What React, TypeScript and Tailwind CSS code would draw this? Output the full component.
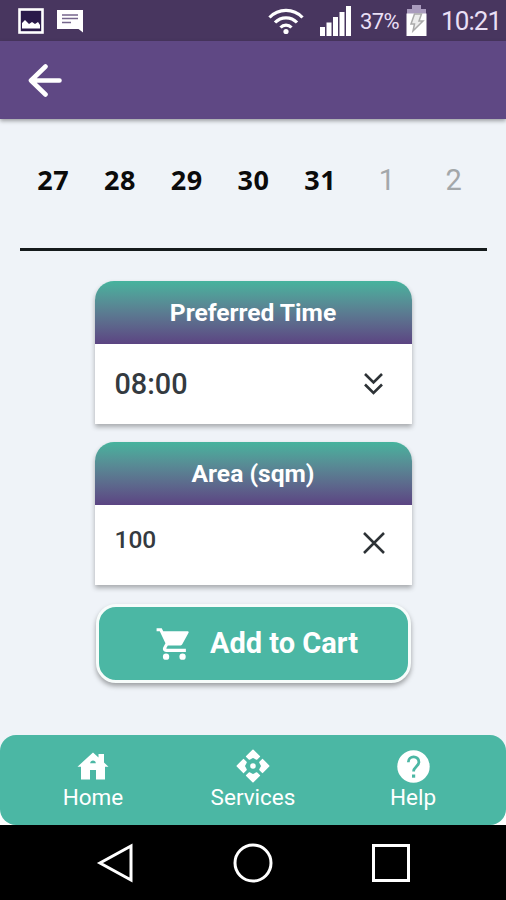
import type { ReactNode } from "react";

type Day = { label: string; muted?: boolean };

const days: Day[] = [
  { label: "27" },
  { label: "28" },
  { label: "29" },
  { label: "30" },
  { label: "31" },
  { label: "1", muted: true },
  { label: "2", muted: true },
];

function StatusBar() {
  return (
    <div className="flex h-[41px] shrink-0 items-center bg-[#48365f] text-[#e9dff5]">
      <svg className="ml-[18px] size-[26px]" viewBox="0 0 26 26">
        <rect x="1.5" y="1.5" width="23" height="23" fill="#2a1a4a" stroke="#fff" strokeWidth="2.6" />
        <path d="M4 20.500v-5.500l3-3 4 4 3-2 3 2 3-2 2 3v3.500z" fill="#fff" />
      </svg>
      <svg className="ml-3 h-[26px] w-7" viewBox="0 0 28 26">
        <path d="M1 2h26v22.500L22.500 21H1z" fill="#fff" />
        <path d="M6 7h16M6 10.500h16M6 14.500h9" stroke="#75668c" strokeWidth="1.500" />
      </svg>
      <svg className="ml-[184px] h-7 w-9" viewBox="0 0 36 28" fill="none" stroke="#fff" strokeWidth="3.200">
        <path d="M1.500 10.500C10.500 1 25.500 1 34.500 10.500" />
        <path d="M7 15.500c6-6.300 16-6.300 22 0" />
        <path d="M12.500 20.500c3-3.200 8-3.200 11 0" />
        <circle cx="18" cy="24.500" r="2.600" fill="#fff" stroke="none" />
      </svg>
      <svg className="ml-4 h-[30px] w-8" viewBox="0 0 32 30" fill="#fff">
        <path d="M0 21h5v9H0zM6.500 16.500h5V30h-5zM13 11h5v19h-5zM19.500 6h5v24h-5zM26 0h5v30h-5z" />
      </svg>
      <span className="mt-[2px] ml-2 w-10 text-[22px] tracking-[-0.6px] whitespace-nowrap">37%</span>
      <svg className="ml-[6px] h-8 w-[21px]" viewBox="0 0 21 32">
        <path d="M6 0h9v4h5v5H1V4h5z" fill="#a99bbd" />
        <path d="M.5 8.500h20V31H.5z" fill="#fff" />
        <path d="M8.500 9h7l-2.500 7h4L7 26l1.500-7H5z" fill="#ececec" stroke="#aaa" strokeWidth="1.500" />
      </svg>
      <span className="mt-[2px] ml-[14px] text-[26px] tracking-[-0.9px]">10:21</span>
    </div>
  );
}

function FieldCard({ title, children }: { title: string; children: ReactNode }) {
  return (
    <section className="w-[317px] rounded-t-[19px] bg-white shadow-[0_3px_5px_rgba(0,0,0,0.3)]">
      <h2 className="flex h-[63px] items-center justify-center rounded-t-[19px] bg-linear-to-b from-[#45b39d] to-[#5b4482] pt-[2px] text-[24.600px] font-bold text-white">
        {title}
      </h2>
      <div className="flex h-20 justify-between pr-[27px] pl-5 text-[#343a40]">{children}</div>
    </section>
  );
}

function CartIcon() {
  return (
    <svg className="size-[38px]" viewBox="0 0 24 24" fill="#fff">
      <path d="M1 2v2h2l3.600 7.600-1.350 2.450C4.500 15.400 5.500 17 7 17h12.500v-2H7.400c-.2 0-.3-.2-.2-.4L8.100 13h7.450c.75 0 1.400-.4 1.750-1L21.200 4.900c.3-.5-.1-.9-.8-.9H5.200L4.250 2z" />
      <circle cx="7" cy="20" r="2" />
      <circle cx="17.400" cy="20" r="2" />
    </svg>
  );
}

function HouseIcon() {
  return (
    <svg className="h-[28px] w-[32px]" viewBox="0 0 32 28">
      <path d="M16 .5 21.500 5.500V2h5.500v8.500l4.500 4.200H28v12.800h-9V18h-6v9.500H4V14.700H.5z" fill="#fff" />
      <path d="M13.200 11.200c0-3.600 5.600-3.600 5.600 0z" fill="#4bb7a4" />
    </svg>
  );
}

function ServicesIcon() {
  const arm = "M0-15.700 6.300-9.500 3.700-7 0-9 -3.700-7-6.300-9.500z";
  return (
    <svg className="size-[36px]" viewBox="-18 -18 36 36" fill="#fff" stroke="#fff" strokeWidth="1.600" strokeLinejoin="round">
      <path d={arm} />
      <path d={arm} transform="rotate(90)" />
      <path d={arm} transform="rotate(180)" />
      <path d={arm} transform="rotate(270)" />
      <circle r="2" />
    </svg>
  );
}

function HelpIcon() {
  return (
    <svg className="size-[33px]" viewBox="0 0 33 33" fill="none">
      <circle cx="16.500" cy="16.500" r="16.200" fill="#fff" />
      <path d="M11.300 12.200c0-7 10.600-7 10.600-.2 0 4.300-5.300 4.700-5.300 9.500" stroke="#4bb7a4" strokeWidth="2.800" />
      <path d="M15 24.500h3.200v3.200H15z" fill="#4bb7a4" />
    </svg>
  );
}

function NavItem({ icon, label }: { icon: ReactNode; label: string }) {
  return (
    <button className="flex w-40 flex-col items-center text-[22.500px] leading-[25px] text-white">
      <span className="flex h-[38px] items-center">{icon}</span>
      {label}
    </button>
  );
}

export default function App() {
  return (
    <div className="flex h-[900px] w-[506px] flex-col overflow-hidden bg-[#eff3f8] font-['Roboto',sans-serif]">
      <StatusBar />
      <header className="flex h-[78px] shrink-0 items-center bg-[#5f4884] pl-7 shadow-[0_2px_4px_rgba(0,0,0,0.35)]">
        <svg className="h-9 w-[35px]" viewBox="0 0 35 36" fill="none" stroke="#fff" strokeWidth="4.600" strokeLinecap="round" strokeLinejoin="round">
          <path d="M31.500 18.500H3M17.500 4.500 3 18.500 17.500 32.500" />
        </svg>
      </header>

      <main className="flex flex-1 flex-col items-center">
        <div className="mt-[37px] ml-px grid h-[95px] w-[467px] grid-cols-7 border-b-[3px] border-[#151a1c] text-center">
          {days.map((day) => (
            <span
              key={day.label}
              className={
                day.muted
                  ? "text-[29px] leading-[48px] text-[#a3a7aa]"
                  : "font-['Open_Sans',sans-serif] text-[27px] leading-[48px] font-bold tracking-[0.6px] text-[#0b0b0b]"
              }
            >
              {day.label}
            </span>
          ))}
        </div>

        <div className="mt-[30px] flex flex-col items-center gap-[18px]">
          <FieldCard title="Preferred Time">
            <span className="text-[28.800px] leading-[80px] font-medium">08:00</span>
            <svg className="mt-[28px] mr-px h-6 w-[21px]" viewBox="0 0 21 24" fill="none" stroke="#2d3236" strokeWidth="2.600">
              <path d="m2 2 8.500 8.500L19 2M2 12.500l8.500 8.500 8.500-8.500" />
            </svg>
          </FieldCard>
          <FieldCard title="Area (sqm)">
            <span className="text-[24.500px] leading-[70px] font-medium">100</span>
            <svg className="mt-[27px] h-[22px] w-[22px]" viewBox="0 0 22 22" fill="none" stroke="#2d3236" strokeWidth="2.500">
              <path d="m1 1 20 20M21 1 1 21" />
            </svg>
          </FieldCard>
          <button className="mt-px flex h-[79px] w-[315px] items-center justify-center gap-[17px] rounded-[20px] border-[3px] border-[#f7fcfb] bg-[#4bb7a4] pl-[7px] text-[29px] font-bold text-white shadow-[0_3px_5px_rgba(0,0,0,0.35)]">
            <CartIcon />
            Add to Cart
          </button>
        </div>
      </main>

      {/* the strip behind the rounded bottom corners is lighter than the page */}
      <div className="shrink-0 bg-linear-to-b from-[#eff3f8] to-white">
        <nav className="flex h-[90px] items-start justify-center rounded-[16px] bg-[#4bb7a4] pt-[12px]">
          <NavItem icon={<HouseIcon />} label="Home" />
          <NavItem icon={<ServicesIcon />} label="Services" />
          <NavItem icon={<HelpIcon />} label="Help" />
        </nav>
      </div>

      <div className="flex h-[75px] shrink-0 items-center justify-center bg-black">
        <svg className="h-10 w-[316px]" viewBox="0 0 316 40" fill="none" stroke="#fff" strokeWidth="3">
          <path d="M36 3v34L5 20z" />
          <circle cx="158" cy="20" r="18" />
          <path d="M278.500 2.500h35v35h-35z" />
        </svg>
      </div>
    </div>
  );
}
